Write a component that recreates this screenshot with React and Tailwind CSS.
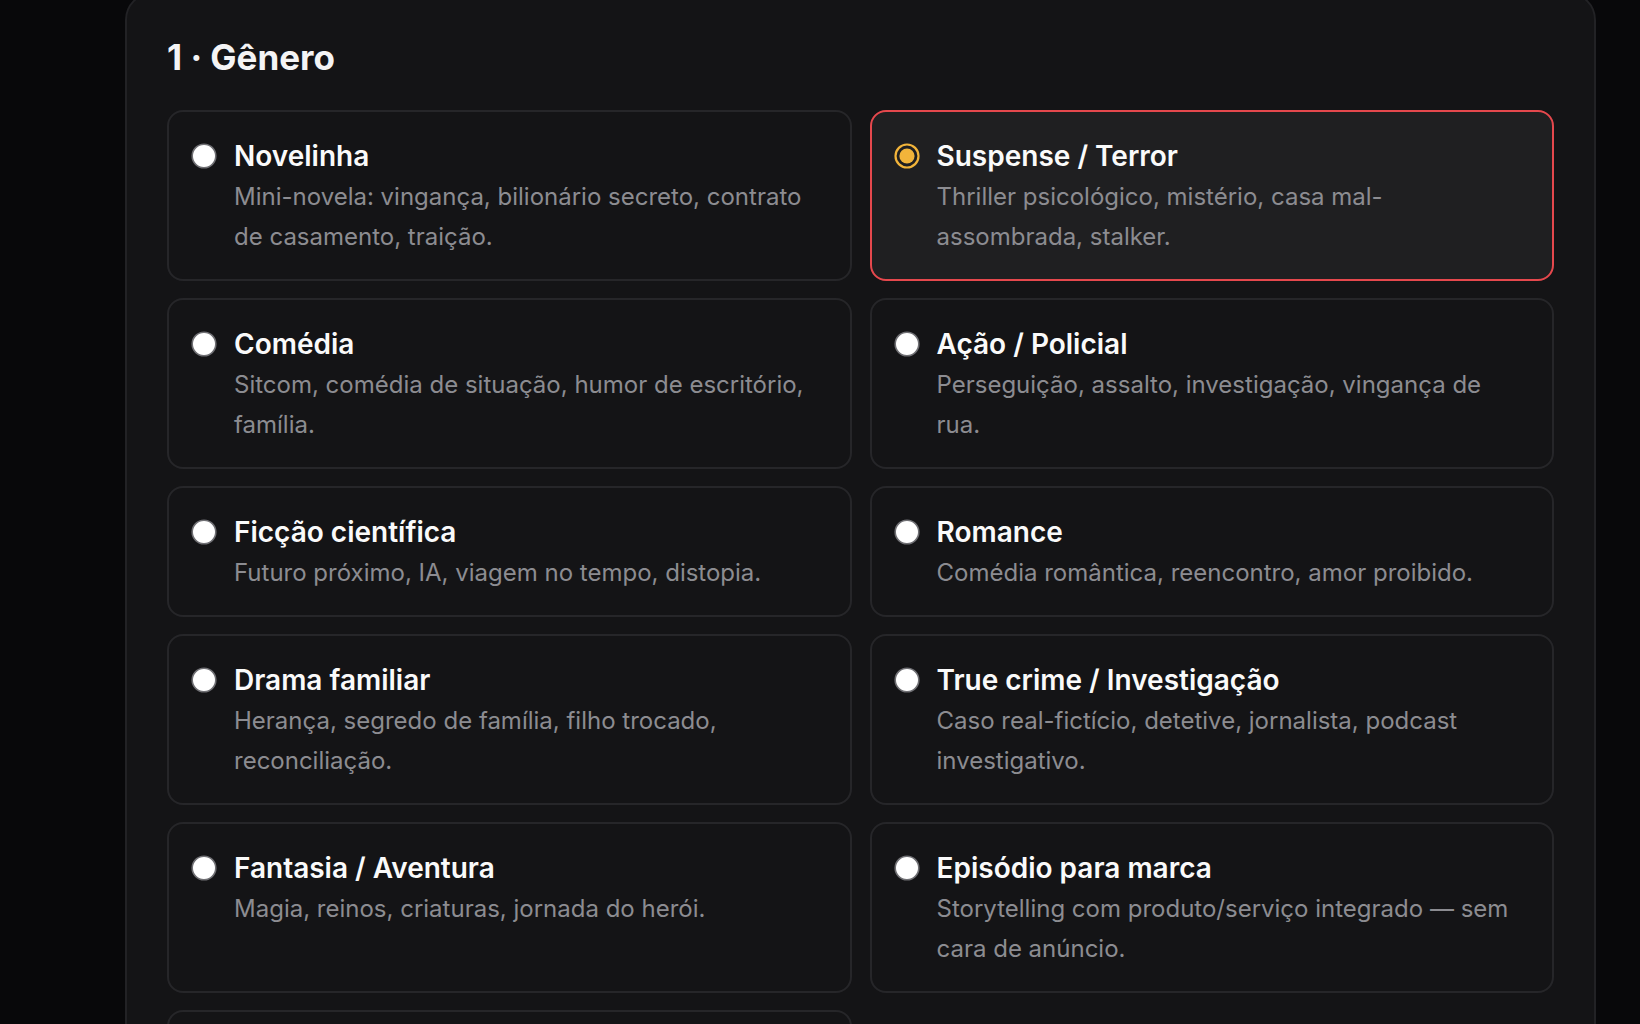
const genres = [
  { title: 'Novelinha', desc: 'Mini-novela: vingança, bilionário secreto, contrato de casamento, traição.' },
  { title: 'Suspense / Terror', desc: 'Thriller psicológico, mistério, casa mal-assombrada, stalker.' },
  { title: 'Comédia', desc: 'Sitcom, comédia de situação, humor de escritório, família.' },
  { title: 'Ação / Policial', desc: 'Perseguição, assalto, investigação, vingança de rua.' },
  { title: 'Ficção científica', desc: 'Futuro próximo, IA, viagem no tempo, distopia.' },
  { title: 'Romance', desc: 'Comédia romântica, reencontro, amor proibido.' },
  { title: 'Drama familiar', desc: 'Herança, segredo de família, filho trocado, reconciliação.' },
  { title: 'True crime / Investigação', desc: 'Caso real-fictício, detetive, jornalista, podcast investigativo.' },
  { title: 'Fantasia / Aventura', desc: 'Magia, reinos, criaturas, jornada do herói.' },
  { title: 'Episódio para marca', desc: 'Storytelling com produto/serviço integrado — sem cara de anúncio.' },
  { title: 'Livre', desc: 'Descreva o seu próprio gênero e tom.' },
];

const Radio = ({ checked }) => (
  <svg width="26" height="26" viewBox="0 0 26 26" className="shrink-0">
    {checked ? (
      <>
        <circle cx="13" cy="13" r="11.5" fill="#1f1f21" stroke="#f2b43a" strokeWidth="2.2" />
        <circle cx="13" cy="13" r="7.6" fill="#f2b43a" />
      </>
    ) : (
      <circle cx="13" cy="13" r="11.8" fill="#ffffff" stroke="#6f6f73" strokeWidth="1.6" />
    )}
  </svg>
);

const GenreCard = ({ genre, selected }) => (
  <div
    className={
      selected
        ? 'rounded-[16px] border-2 border-[#e5484d] bg-[#1f1f21] pl-[22px] pr-[32px] pt-[23px] pb-[22px]'
        : 'rounded-[16px] border-2 border-[#262629] bg-[#141416] pl-[22px] pr-[32px] pt-[23px] pb-[22px]'
    }
  >
    <div className="flex gap-[17px]">
      <div className="flex h-[42px] items-center">
        <Radio checked={selected} />
      </div>
      <div className="min-w-0">
        <div className="text-[28px] font-semibold leading-[42px] text-[#fafafa]">{genre.title}</div>
        <p className="text-[24px] leading-[40px] text-[#8c8c91]">{genre.desc}</p>
      </div>
    </div>
  </div>
);

export default function App() {
  return (
    <div
      className="h-[1024px] overflow-hidden bg-[#08080a] pl-[125px] pr-[44px]"
      style={{ fontFamily: 'Inter, "Noto Sans", sans-serif' }}
    >
      <div className="-mt-[8px] rounded-[28px] border-2 border-[#222225] bg-[#141416] px-[40px] pt-[39px] pb-[40px]">
        <h2 className="mb-[28px] text-[35px] font-bold leading-[49px] text-[#f4f4f5]">1 · Gênero</h2>
        <div className="grid grid-cols-2 gap-x-[18px] gap-y-[17px]">
          {genres.map((g, i) => (
            <GenreCard key={g.title} genre={g} selected={i === 1} />
          ))}
        </div>
      </div>
    </div>
  );
}
